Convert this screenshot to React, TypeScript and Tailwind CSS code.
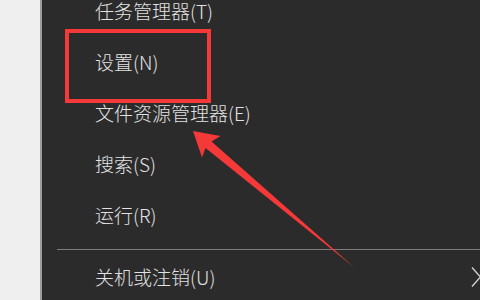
const items = ['任务管理器(T)', '设置(N)', '文件资源管理器(E)', '搜索(S)', '运行(R)'];

export default function App() {
  return (
    <div
      className="relative flex w-[480px] h-[300px] overflow-hidden bg-[#2b2b2b] text-[#e2e2e2]"
      style={{ fontFamily: '"Noto Sans CJK SC", "Noto Sans", sans-serif' }}
    >
      {/* desktop strip + border */}
      <div className="w-[40px] shrink-0 bg-[#efefef]" />
      <div className="w-[2px] shrink-0 bg-[#9c9c9c]" />

      {/* menu */}
      <div className="flex-1 flex flex-col overflow-hidden">
        <ul>
          {items.map((label, i) => (
            <li
              key={label}
              className={
                i === 0
                  ? 'h-[36px] flex items-start pt-px pl-[53px] text-[19px] leading-none font-light'
                  : 'h-[51px] flex items-center pl-[53px] text-[19px] leading-none font-light'
              }
            >
              {label}
            </li>
          ))}
        </ul>
        <div className="mt-[9px] ml-[15px] h-px bg-[#7c7c7c]" />
        <div className="mt-[4px] h-[51px] flex items-center pl-[53px] text-[19px] leading-none font-light">
          <span>关机或注销(U)</span>
          <svg className="ml-auto -mr-[1px] w-[10px] h-[22px]" viewBox="0 0 10 22" fill="none">
            <path d="M1 1.5 L9.5 11 L1 20.5" stroke="#d2d2d2" strokeWidth="1.4" />
          </svg>
        </div>
      </div>

      {/* annotation: highlight box */}
      <div className="absolute left-[65px] top-[29px] w-[146px] h-[74px] border-4 border-[#f53838]" />

      {/* annotation: arrow */}
      <svg className="absolute left-0 top-0 w-[480px] h-[300px] pointer-events-none" viewBox="0 0 480 300">
        <polygon
          points="193,131 220.5,136 211.5,141.5 355,268 205.5,148 202,157.5"
          fill="#f53838"
        />
      </svg>
    </div>
  );
}
